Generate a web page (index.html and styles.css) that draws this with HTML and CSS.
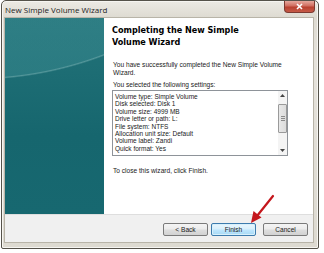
FILE: index.html
```html
<!DOCTYPE html>
<html>
<head>
<meta charset="utf-8">
<link rel="stylesheet" href="styles.css">
</head>
<body>
<div class="window">
  <div class="titlebar">
    <span class="title">New Simple Volume Wizard</span>
    <div class="close">
      <svg width="9" height="7" viewBox="0 0 9 7"><path d="M2 1 L7 6 M7 1 L2 6" stroke="#fff" stroke-width="1.6" fill="none"/></svg>
    </div>
  </div>
  <div class="client">
    <div class="main">
      <div class="banner"></div>
      <div class="content">
        <h1 class="heading">Completing the New Simple Volume Wizard</h1>
        <p class="text p1">You have successfully completed the New Simple Volume Wizard.</p>
        <p class="text p2">You selected the following settings:</p>
        <div class="listbox">
          <div class="items">
            <div>Volume type: Simple Volume</div>
            <div>Disk selected: Disk 1</div>
            <div>Volume size: 4999 MB</div>
            <div>Drive letter or path: L:</div>
            <div>File system: NTFS</div>
            <div>Allocation unit size: Default</div>
            <div>Volume label: Zandi</div>
            <div>Quick format: Yes</div>
          </div>
          <div class="scrollbar">
            <div class="arrow-btn"><svg width="5" height="3" viewBox="0 0 5 3"><path d="M0 3 L2.5 0 L5 3Z" fill="#444"/></svg></div>
            <div class="track">
              <div class="thumb"><span></span><span></span><span></span></div>
            </div>
            <div class="arrow-btn"><svg width="5" height="3" viewBox="0 0 5 3"><path d="M0 0 L2.5 3 L5 0Z" fill="#444"/></svg></div>
          </div>
        </div>
        <p class="text p3">To close this wizard, click Finish.</p>
      </div>
    </div>
    <div class="footer">
      <button class="btn">&lt; Back</button>
      <button class="btn default">Finish</button>
      <button class="btn cancel">Cancel</button>
    </div>
  </div>
</div>
<svg class="red-arrow" width="40" height="40" viewBox="0 0 40 40">
  <path d="M26 2 L10 22" stroke="#c4161c" stroke-width="2.2" stroke-linecap="round" fill="none"/>
  <path d="M4 29 L6.5 17 L14.5 23.5 Z" fill="#c4161c"/>
</svg>
</body>
</html>
```
FILE: styles.css
```css
html, body {
  margin: 0;
  padding: 0;
  background: #ffffff;
}

body {
  position: relative;
  width: 324px;
  height: 253px;
  overflow: hidden;
}

.window {
  width: 316px;
  height: 247px;
  margin-left: 1px;
  border: 1px solid #55524a;
  border-radius: 5px 5px 2px 2px;
  background: linear-gradient(#eceae4, #dedbd2 16px, #e6e3dc 60px, #dddad1);
  display: flex;
  flex-direction: column;
  box-shadow: inset 0 0 0 1px #f6f5f1;
}

.titlebar {
  height: 17px;
  flex: none;
  display: flex;
  align-items: flex-start;
  padding-left: 3px;
}

.title {
  font-family: "Open Sans", "Noto Sans", sans-serif;
  font-size: 8px;
  line-height: 17px;
  color: #1c1c1c;
}

.close {
  margin-left: auto;
  margin-right: 3px;
  width: 29px;
  height: 11px;
  border: 1px solid #7c3a31;
  border-top: none;
  border-radius: 0 0 4px 4px;
  background: linear-gradient(#e6a89d, #d06d5f 45%, #b9402f 55%, #c55a48);
  display: flex;
  align-items: center;
  justify-content: center;
}

.client {
  flex: none;
  height: 224px;
  margin: 0 5px 0 3px;
  display: flex;
  flex-direction: column;
  box-shadow: 0 0 0 1px #b8b4a8;
}

.main {
  height: 196px;
  display: flex;
  background: #ffffff;
}

.banner {
  width: 99px;
  flex: none;
  background:
    radial-gradient(circle 362px at -30px -300px, rgba(60, 140, 146, 0.45) 99.3%, rgba(150, 200, 200, 0.45) 99.6%, transparent 100%),
    linear-gradient(#237379, #16666e 60%, #176870);
}

.content {
  flex: 1;
  padding: 6px 0 0 8px;
  font-family: "Liberation Sans", Arial, sans-serif;
  color: #1a1a1a;
}

.heading {
  margin: 0;
  width: 150px;
  font-family: "DejaVu Sans Condensed", "DejaVu Sans", Verdana, sans-serif;
  font-stretch: condensed;
  font-weight: bold;
  font-size: 9px;
  line-height: 12px;
  color: #000;
}

.text {
  margin: 0;
  padding-left: 1px;
  width: 175px;
  font-size: 6.6px;
  line-height: 8px;
}

.p1 {
  margin-top: 13px;
}

.p2 {
  margin-top: 4px;
}

.listbox {
  margin-top: 1px;
  width: 174px;
  height: 64px;
  border: 1px solid #8e9399;
  display: flex;
  overflow: hidden;
}

.items {
  flex: 1;
  padding: 2px 2px 0;
  font-size: 6.5px;
  line-height: 7.4px;
  overflow: hidden;
}

.scrollbar {
  width: 9px;
  flex: none;
  background: #f4f4f4;
  display: flex;
  flex-direction: column;
}

.arrow-btn {
  height: 9px;
  display: flex;
  align-items: center;
  justify-content: center;
}

.track {
  flex: 1;
  padding-top: 4px;
}

.thumb {
  height: 27px;
  border: 1px solid #9a9a9a;
  border-radius: 1px;
  background: linear-gradient(90deg, #e8e8e8, #dcdcdc);
  display: flex;
  flex-direction: column;
  align-items: center;
  justify-content: center;
  gap: 1px;
}

.thumb span {
  display: block;
  width: 4px;
  height: 1px;
  background: #8a8a8a;
}

.p3 {
  margin-top: 11px;
}

.footer {
  flex: 1;
  border-top: 1px solid #dedede;
  background: #f0f0f0;
  display: flex;
  justify-content: flex-end;
  align-items: flex-start;
  padding: 8px 5px 0 0;
  gap: 3px;
}

.btn {
  width: 45px;
  height: 13px;
  padding: 0;
  border: 1px solid #7a7a7a;
  border-radius: 2px;
  background: linear-gradient(#f4f4f4, #ececec 45%, #dddddd 55%, #d2d2d2);
  font-family: "Liberation Sans", Arial, sans-serif;
  font-size: 6.6px;
  line-height: 11px;
  color: #1a1a1a;
}

.btn.default {
  border-color: #3d7bad;
  background: linear-gradient(#eaf6fd, #d9f0fc 45%, #bee6fd 55%, #a7d9f5);
  box-shadow: inset 0 0 0 1px #d8f0fb;
}

.btn.cancel {
  margin-left: 4px;
}

.red-arrow {
  position: absolute;
  left: 247px;
  top: 194px;
}
```
